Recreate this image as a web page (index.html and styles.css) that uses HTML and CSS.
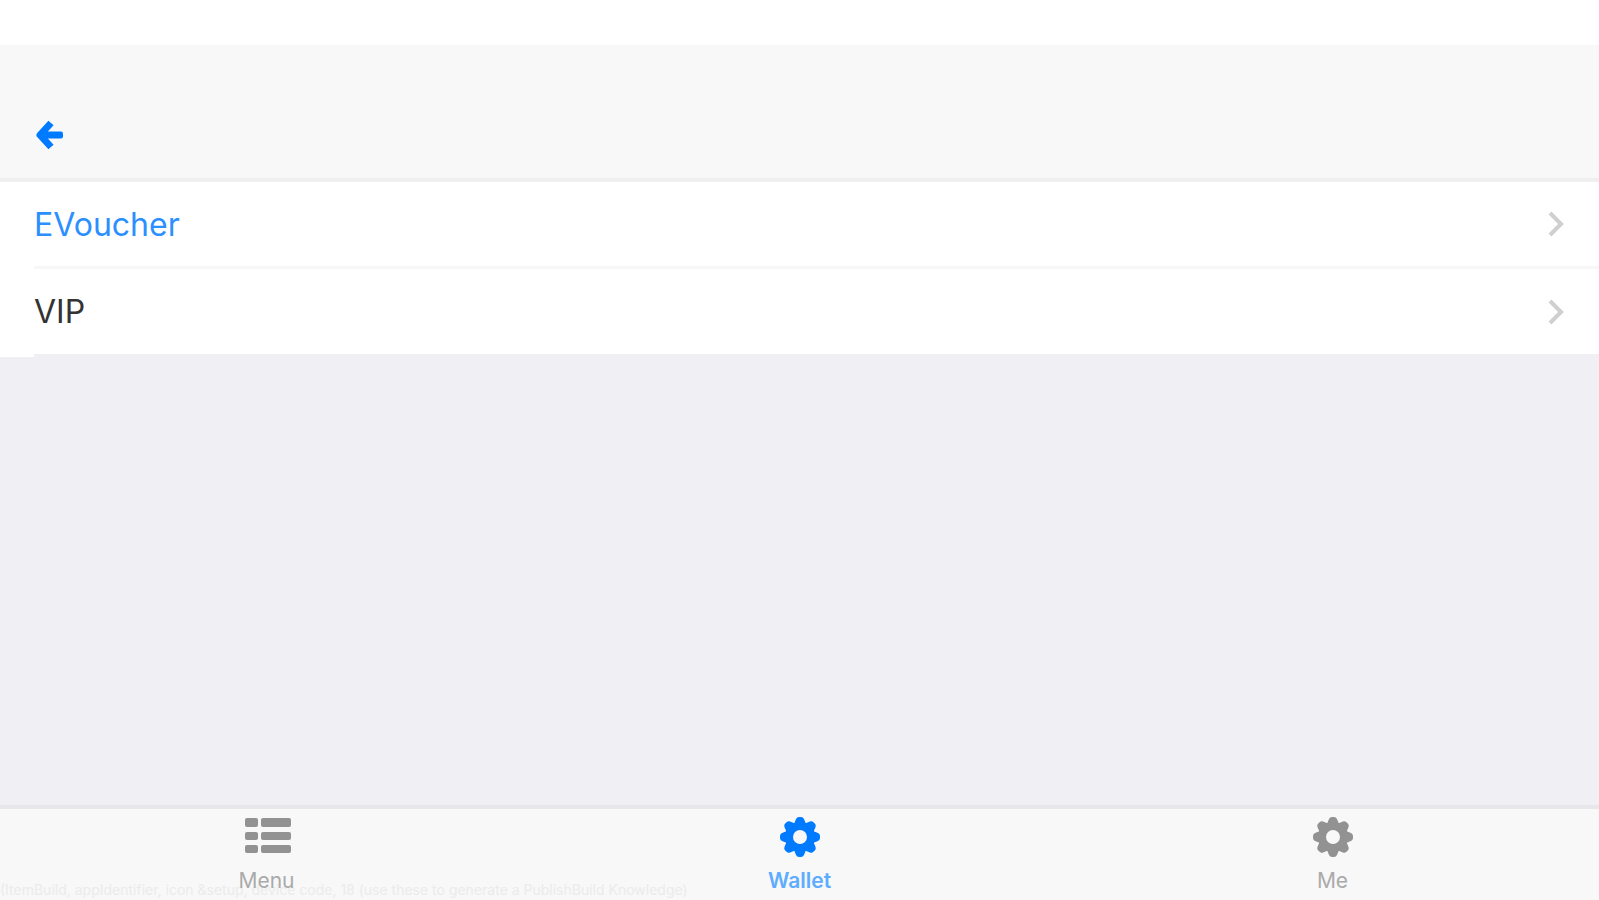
FILE: index.html
```
<!DOCTYPE html>
<html lang="en">
<head>
    <meta charset="UTF-8" />
    <meta name="viewport" content="width=device-width, initial-scale=1" />
    <title>Wallet</title>
    <link rel="stylesheet" href="styles.css">
</head>
<body>
    <header class="navbar">
        <button class="back" type="button" aria-label="Back">
            <svg width="30" height="30" viewBox="0 0 30 30">
                <path d="M5 15H26M17 3L6 15L17 27" fill="none" stroke="currentColor" stroke-width="7" stroke-linejoin="round" />
                <path d="M26 11.5H27Q29 11.5 29 13.5V16.5Q29 18.5 27 18.5H26Z" fill="currentColor" />
            </svg>
        </button>
    </header>

    <main class="content">
        <ul class="list">
            <li>
                <a class="item active" href="#evoucher">
                    <span>EVoucher</span>
                    <svg class="chevron" width="18" height="28" viewBox="0 0 18 28"><path d="M3 3L14 14L3 25" /></svg>
                </a>
            </li>
            <li>
                <a class="item" href="#vip">
                    <span>VIP</span>
                    <svg class="chevron" width="18" height="28" viewBox="0 0 18 28"><path d="M3 3L14 14L3 25" /></svg>
                </a>
            </li>
        </ul>
    </main>

    <nav class="tabs">
        <a class="tab" href="#menu">
            <svg width="48" height="40" viewBox="0 0 48 40" fill="currentColor">
                <rect x="2" y="1" width="13" height="9" rx="2" />
                <rect x="18" y="1" width="30" height="9" rx="2" />
                <rect x="2" y="15" width="13" height="8" rx="2" />
                <rect x="18" y="15" width="30" height="8" rx="2" />
                <rect x="2" y="28" width="13" height="8" rx="2" />
                <rect x="18" y="28" width="30" height="8" rx="2" />
            </svg>
            <span>Menu</span>
        </a>
        <a class="tab selected" href="#wallet">
            <svg width="40" height="40" viewBox="0 0 40 40">
                <use href="#gear" />
            </svg>
            <span>Wallet</span>
        </a>
        <a class="tab" href="#me">
            <svg width="40" height="40" viewBox="0 0 40 40">
                <defs>
                    <g id="gear">
                        <circle cx="20" cy="20" r="11" fill="none" stroke="currentColor" stroke-width="8" />
                        <g fill="currentColor">
                            <path id="tooth" d="M14 7L16 2Q17 0 19 0H21Q23 0 24 2L26 7ZM14 33L16 38Q17 40 19 40H21Q23 40 24 38L26 33Z" />
                            <use href="#tooth" transform="rotate(45 20 20)" />
                            <use href="#tooth" transform="rotate(90 20 20)" />
                            <use href="#tooth" transform="rotate(135 20 20)" />
                        </g>
                    </g>
                </defs>
                <use href="#gear" />
            </svg>
            <span>Me</span>
        </a>
        <p class="note">(ItemBuild, appIdentifier, icon &amp;setup, device code, 18 (use these to generate a PublishBuild Knowledge)</p>
    </nav>
</body>
</html>
```
FILE: styles.css
```
* {
    box-sizing: border-box;
}

body {
    margin: 0;
    padding-top: 45px;
    min-height: 100vh;
    display: flex;
    flex-direction: column;
    font-family: Inter, "Liberation Sans", sans-serif;
    background-color: #fff;
}

a {
    color: inherit;
    text-decoration: none;
}

.navbar {
    padding: 75px 34px 28px;
    background-color: #f8f8f8;
    border-bottom: 4px solid #efefef;
}

.back {
    display: block;
    padding: 0;
    border: none;
    background: none;
    color: #007aff;
    cursor: pointer;
}

    .back svg {
        display: block;
    }

.content {
    flex: 1;
    background-color: #efeff4;
}

.list {
    margin: 0;
    padding: 0 0 0 34px;
    list-style: none;
    background-color: #fff;
}

.item {
    display: flex;
    align-items: center;
    justify-content: space-between;
    height: 87px;
    padding-right: 34px;
    border-bottom: 3px solid #f7f7f7;
    font-size: 32px;
    color: #333;
}

    .item.active {
        color: #2b8fff;
    }

li:last-child .item {
    height: 88px;
    border-bottom-color: #efeff4;
}

.chevron {
    fill: none;
    stroke: #cfcfd1;
    stroke-width: 4;
}

.tabs {
    position: relative;
    display: flex;
    border-top: 4px solid #e7e7eb;
    background-color: #f8f8f8;
}

.tab {
    flex: 1;
    display: flex;
    flex-direction: column;
    align-items: center;
    gap: 12px;
    padding: 8px 0 7px;
    color: #929292;
    font-size: 21px;
    line-height: 24px;
}

    .tab span {
        position: relative;
        z-index: 1;
        color: #aaa;
    }

    .tab.selected {
        color: #007aff;
    }

        .tab.selected span {
            color: #5eacff;
            font-weight: 600;
        }

/* build note under the tab labels */
.note {
    position: absolute;
    left: 0;
    bottom: 2px;
    margin: 0;
    font-size: 14px;
    line-height: 16px;
    color: #ebebeb;
    white-space: nowrap;
}
```
